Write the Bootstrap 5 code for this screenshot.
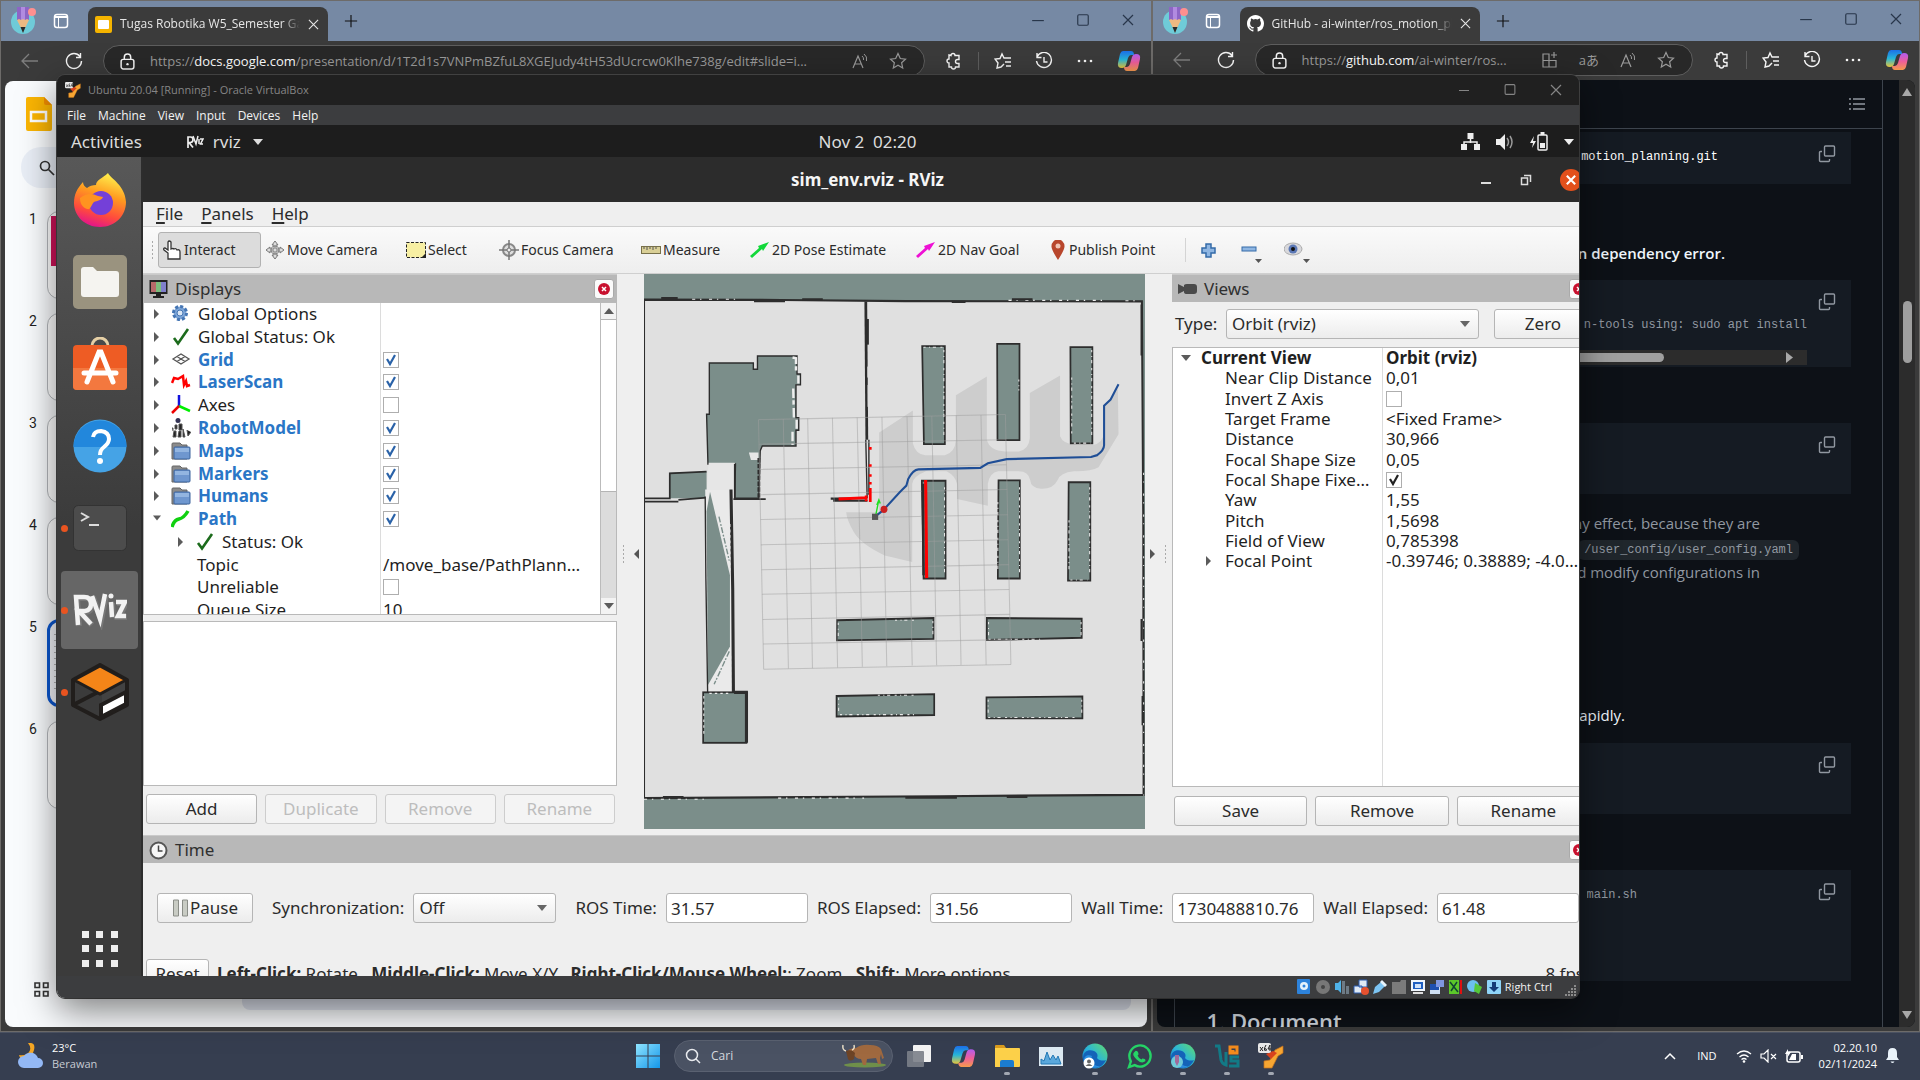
<!DOCTYPE html>
<html lang="id">
<head>
<meta charset="utf-8">
<meta name="viewport" content="width=device-width, initial-scale=1">
<title>Desktop</title>
<link href="https://cdn.jsdelivr.net/npm/bootstrap@5.3.0/dist/css/bootstrap.min.css" rel="stylesheet">
<script src="https://cdn.jsdelivr.net/npm/bootstrap@5.3.0/dist/js/bootstrap.bundle.min.js"></script>
<style>
  :root { --win: "Open Sans", sans-serif; --ubu: "Noto Sans", sans-serif; --mono: "Liberation Mono", monospace; }
  html, body { height: 100%; }
  body { font-family: var(--win); font-size: 12px; line-height: 16px; background: #3a3a3a; overflow: hidden; }
  svg { display: block; flex: none; }
  button, input, select { font-family: inherit; }
  .desktop { height: calc(100vh - 48px); }
  .minh0 { min-height: 0; }
  .bare { background: none; border: 0; padding: 0; color: inherit; display: flex; align-items: center; justify-content: center; }

  /* browser windows */
  .browser { background: #3b3b3b; border: 1px solid #6d6b69; min-width: 0; }
  .browser-l { flex: 3 1 0; } .browser-r { flex: 2 1 0; }
  .tabstrip { height: 40px; background: #7689a4; padding-left: 10px; }
  .tab { width: 240px; height: 34px; background: #3b3b3b; border-radius: 8px 8px 0 0; color: #e6e6e6; padding: 0 9px 0 7px; margin-left: 19px; }
  .tab-name { overflow: hidden; white-space: nowrap; -webkit-mask-image: linear-gradient(90deg, #000 90%, transparent); mask-image: linear-gradient(90deg, #000 90%, transparent); }
  .winbtns { gap: 30px; color: #28364a; padding: 0 16px 3px 0; }
  .toolbar-b { height: 40px; color: #f4f4f4; padding: 0 10px 0 20px; }
  .toolbar-b > button + button { margin-left: 26px; }
  .addr { height: 32px; background: #282828; border: 1px solid #5e5e5e; border-radius: 16px; color: #9a9a9a; font-size: 13px; margin: 0 20px; padding: 0 17px 0 16px; gap: 20px; }
  .addr b { color: #fff; font-weight: 400; }
  .addr-text { overflow: hidden; white-space: nowrap; margin-left: -5px; }
  .addr-tr { font-family: "Open Sans", "Noto Sans CJK JP", sans-serif; }
  .tools { gap: 23px; }
  .tools .vline { width: 1px; height: 18px; background: #5e5e5e; margin: 0 -8px; }
  .pane { margin: 0 4px 4px; border-radius: 8px; overflow: hidden; }

  /* slides page */
  .slides { background: #f9fbfd; padding-left: 16px; }
  .slides .find { width: 60px; height: 41px; background: #e9eef6; border-radius: 20px; padding-left: 18px; }
  .thumbs { gap: 14px; margin-top: 23px; }
  .thumb { height: 88px; width: 150px; background: #fff; border: 1px solid #b4b7bb; border-radius: 12px; color: #8a8a8a; padding: 12px 4px; overflow: hidden; }
  .thumb.on { border: 3px solid #0b57d0; background: #f5f7fb; }
  .thumb-no { width: 26px; color: #1f1f1f; font-family: Roboto, sans-serif; font-size: 14px; padding-left: 8px; }
  .cover { height: 50px; background: #d0125a; margin: -8px 0 0 -1px; }
  .lines { width: 60px; height: 60px; background: repeating-linear-gradient(#b5b5b5 0 1px, transparent 1px 6px); }
  .foot { padding: 0 16px 17px 13px; gap: 193px; }
  .notes { height: 42px; background: #dfe3ee; border-radius: 8px; }

  /* repository page */
  .gh { background: #0d1117; color: #9198a1; font-size: 15px; line-height: 24px; }
  .gh-col { border: solid #3d444d; border-width: 0 1px; margin: 0 16px 0 17px; width: 0; }
  .gh-head { height: 49px; border-bottom: 1px solid #3d444d; padding-right: 17px; margin-bottom: 3px; }
  .blk { background: #151b23; margin-right: 31px; padding: 13px 15px 0 0; height: 71px; overflow: hidden; }
  .blk.b1 { height: 52px; margin-bottom: 57px; } .blk.b2 { height: 87px; margin: 15px 31px 56px 0; }
  .blk.b4 { margin: 16px 31px 56px 0; } .blk.b5 { height: 111px; margin-bottom: 26px; }
  .blk pre, .gh code { font-family: var(--mono); font-size: 12px; line-height: 20px; color: #9198a1; margin: 0; }
  .blk pre { overflow: hidden; padding-top: 2px; }
  .blk.b1 pre { color: #fff; padding-right: 100px; } .blk.b2 pre { text-align: right; padding-right: 29px; padding-top: 4px; } .blk.b5 pre { padding-right: 181px; }
  .gh code { background: #20262c; border-radius: 6px; padding: 3px 6px; }
  .gh p { margin: 0; text-align: right; color: #f0f6fc; }
  .gh .lead-err { padding-right: 157px; }
  .gh .rap { padding: 119px 257px 0 0; }
  .gh .note { color: #9198a1; padding: 17px 83px 0 0; }
  .gh .note span { padding-right: 39px; }
  .gh h2 { font-size: 22px; line-height: 28px; font-weight: 600; color: #d5dbe2; margin: 0 0 0 32px; }
  .gutter { width: 16px; background: #2c2c2c; padding: 8px 0; }
  .gutter .thumb-v { width: 9px; height: 62px; border-radius: 5px; background: #9f9f9f; margin-top: 205px; }
  .hscroll { height: 15px; background: #2c2c2c; margin: 15px 29px 0 0; padding-right: 14px; }
  .hscroll div { width: 340px; height: 9px; border-radius: 5px; background: #9f9f9f; margin-right: 122px; }

  /* virtual machine window */
  .vm, .vm-shadow { position: absolute; left: 57px; right: 341px; top: 75px; bottom: 82px; border-radius: 8px; }
  .vm { overflow: hidden; background: #3c3d3f; color: #f2f2f2; }
  .vm-shadow { box-shadow: 0 12px 36px rgba(0,0,0,.5), 0 0 0 1px #4a4a4a; }
  .vm-title { height: 30px; background: #202020; color: #858585; font-size: 11px; padding: 0 16px 0 8px; gap: 7px; }
  .vm-btns { gap: 32px; }
  .vm-menu { height: 21px; padding: 1px 0 0 10px; gap: 12px; }
  .vm-menu a, .rv-menu a { color: inherit; text-decoration: none; }
  .vm-status { height: 22px; padding-right: 2px; gap: 3px; font-size: 11px; }
  .guest { overflow: hidden; font-family: var(--ubu); font-size: 17px; line-height: 22px; }
  .topbar { height: 32px; background: #1d1d1d; color: #dcdcdc; display: grid; grid-template-columns: 1fr auto 1fr; padding: 1px 5px 0 14px; }
  .topbar .date { padding-left: 90px; }
  .topbar .app-ic { margin: 0 9px 0 44px; }
  .dock { width: 86px; background: linear-gradient(#585858, #3b3b3b 45%); border-right: 2px solid #2d2d2d; padding: 4px 0 4px 1px; }
  .dock-item { width: 77px; height: 78px; border-radius: 4px; margin: 0 auto 4px; position: relative; }
  .dock-item.sel { background: #666; }
  .dock-item.run::before { content: ""; position: absolute; left: 0; top: 36px; width: 7px; height: 7px; border-radius: 50%; background: #e95420; }

  /* rviz */
  .rviz { background: #efefef; color: #2b2b2b; margin-right: -13px; min-width: 0; }
  .rv-title { height: 45px; background: #2c2c2c; color: #f5f5f5; font-weight: 700; display: grid; grid-template-columns: 1fr auto 1fr; padding: 2px 10px 0; }
  .rv-btns { gap: 28px; padding-bottom: 1px; }
  .rv-close { width: 22px; height: 22px; border-radius: 50%; background: #e2501c; color: #fff; }
  .rv-menu { height: 25px; padding: 1px 0 0 13px; gap: 18px; }
  .rv-menu u { text-underline-offset: 2px; text-decoration-thickness: 2px; }
  .rv-tools { height: 48px; background: linear-gradient(#fafafa, #eee); border: solid #cfcfcf; border-width: 1px 0; font-size: 14px; padding: 1px 0 0 8px; }
  .rv-tools .tool { height: 36px; border: 1px solid transparent; border-radius: 3px; padding: 0 3px; gap: 2px; justify-content: flex-start; white-space: nowrap; }
  .rv-tools .tool.down { background: #dcdcdc; border-color: #b2b2b2; }
  .rv-tools .sep { border-left: 1px solid #d4d4d4; height: 24px; margin: 0 15px 0 3px; }
  .rv-tools .more { gap: 21px; }
  .w1 { width: 103px; } .w2 { width: 141px; } .w3 { width: 93px; } .w4 { width: 142px; } .w5 { width: 109px; } .w6 { width: 166px; } .w7 { width: 135px; } .w8 { width: 135px; }
  .ph { height: 28px; background: #b8b8b8; border-top: 1px solid #cacaca; color: #303030; padding: 1px 3px 0 6px; gap: 7px; }
  .ph svg.ic { width: 19px; }
  .xbtn { width: 20px; height: 20px; background: #fafafa; border: 1px solid #aaa; border-radius: 3px; margin-left: auto; }
  .btn-q { height: 30px; flex: 1 1 0; padding: 0; font-size: 17px; line-height: 22px; color: #2b2b2b; border: 1px solid #b5b5b5; border-radius: 3px; background: linear-gradient(#fff, #ececec); }
  .btn-q:disabled { color: #bdbdbd; border-color: #cdcdcd; background: #f4f4f4; opacity: 1; }
  .disp { width: 474px; } .views { width: 420px; }
  .tree { background: #fff; border: 1px solid #b9b9b9; min-height: 0; overflow: hidden; color: #1f1f1f; }
  .tree-rows { display: grid; grid-auto-rows: 1fr; flex: 1; white-space: nowrap; }
  .d-rows { height: 319px; background: linear-gradient(#dcdcdc, #dcdcdc) 236px 0 / 1px 100% no-repeat; }
  .v-rows { height: 224px; line-height: 20px; }
  .v-tree { background: linear-gradient(#dcdcdc, #dcdcdc) 209px 0 / 1px 100% no-repeat #fff; }
  .tr-d { display: grid; grid-template-columns: 239px 1fr; align-items: center; }
  .tr-v { display: grid; grid-template-columns: 213px 1fr; align-items: center; }
  .tr-d > :first-child { display: flex; align-items: center; padding-left: 9px; }
  .tr-d > .lvl2:first-child { padding-left: 33px; }
  .tr-d > .lvl3:first-child { padding-left: 53px; }
  .tr-d .ar { width: 18px; height: 12px; } .tr-d .ic { width: 20px; height: 20px; margin-right: 7px; }
  .tr-v > :first-child { display: flex; align-items: center; padding-left: 8px; }
  .tr-v .ar { width: 20px; height: 12px; } .tr-v .sub { padding-left: 44px; }
  .blue { color: #2a76c6; font-weight: 700; }
  .tick.form-check-input { width: 16px; height: 16px; margin: 0; border: 1px solid #aeaeae; border-radius: 0; background: #fff center / 14px no-repeat; display: block; }
  .tick.form-check-input:checked { background-color: #fff; border-color: #aeaeae; background-image: url("data:image/svg+xml,%3Csvg xmlns='http://www.w3.org/2000/svg' viewBox='0 0 14 14'%3E%3Cpath d='M3 6l3 5 5-9' fill='none' stroke='%232a62a8' stroke-width='2.2'/%3E%3C/svg%3E"); }
  .tick.blk-tick.form-check-input:checked { background-image: url("data:image/svg+xml,%3Csvg xmlns='http://www.w3.org/2000/svg' viewBox='0 0 14 14'%3E%3Cpath d='M3 6l3 5 5-9' fill='none' stroke='%23222' stroke-width='2.2'/%3E%3C/svg%3E"); }
  .sb { width: 16px; background: #dcdcdc; border-left: 1px solid #bbb; }
  .sb .end { height: 16px; background: #f3f3f3; }
  .sb .grip { height: 173px; background: #fff; border: solid #b4b4b4; border-width: 1px 0; }
  .form-select.q { height: 30px; padding: 0 24px 0 5px; font-size: 17px; line-height: 22px; color: #2b2b2b; border: 1px solid #b5b5b5; border-radius: 3px; background: url("data:image/svg+xml,%3Csvg xmlns='http://www.w3.org/2000/svg' viewBox='0 0 10 6'%3E%3Cpath d='M0 0h10L5 6z' fill='%23666'/%3E%3C/svg%3E") right 8px center / 10px 6px no-repeat, linear-gradient(#fff, #ececec); }
  .form-control.q { height: 30px; min-width: 0; flex: 1 1 0; padding: 0 4px; font-size: 17px; line-height: 22px; color: #2b2b2b; border: 1px solid #b5b5b5; border-radius: 3px; background: #fff; }
  .type-row { height: 45px; padding-left: 3px; }
  .type-row label { width: 51px; } .type-row .form-select.q { width: 253px; }
  .type-row .btn-q { margin-left: 15px; padding: 0 26px; }
  .map { min-width: 0; height: calc(100% - 6px); }
  .time-row { padding: 0 13px 0 14px; margin-top: 30px; white-space: nowrap; gap: 9px; }
  .time-row .btn-q { flex: 0 0 96px; }
  .time-row .sync-l { margin-left: 10px; } .time-row .form-select.q { width: 143px; } .time-row .ros-l { margin-left: 10px; }
  .bottom { height: 141px; overflow: hidden; }
  .blank { height: 165px; background: #fff; border: 1px solid #b9b9b9; margin: 6px 0 8px; }
  .disp-btns { padding: 0 2px 11px 3px; } .view-btns { padding: 9px 2px; }
  .split { width: 27px; color: #555; }
  .dots-v { width: 3px; height: 20px; background: radial-gradient(circle, #aaa 1px, transparent 1px) 0 0 / 3px 4px; }
  .rv-tools .dots-v { margin-right: 4px; }
  .status-row { margin: 36px 0 0 3px; color: #2b2b2b; white-space: nowrap; }
  .reset { flex: none; width: 63px; }
  .status-row .fps { margin-left: auto; padding-right: 8px; }

  /* taskbar */
  .taskbar { height: 48px; background: #363e50; border-top: 1px solid #4b5262; color: #fff; display: grid; grid-template-columns: 1fr auto 1fr; font-size: 11px; padding: 0 21px 2px 18px; }
  .taskbar .muted { color: #c6cad2; }
  .apps { gap: 16px; padding-left: 2px; }
  .app { width: 28px; height: 46px; position: relative; }
  .app.open::after { content: ""; position: absolute; left: 11px; bottom: 4px; width: 6px; height: 3px; border-radius: 2px; background: #a3a8b2; }
  .tb-search { width: 219px; height: 32px; border-radius: 16px; background: #4a5263; border: 1px solid #5a6171; padding: 0 4px 0 10px; color: #d5d8de; margin: 0 -4px; }
  .tb-search input { background: none; border: 0; color: #d5d8de; font-size: 12px; outline: 0; min-width: 0; padding: 0 0 0 10px; }
  .tb-search input::placeholder { color: #d5d8de; opacity: 1; }
  .lang { margin: 0 19px 0 21px; } .clock { margin: 0 9px 0 16px; }
</style>
</head>
<body>
<svg width="0" height="0" class="position-absolute" aria-hidden="true">
  <defs>
    <linearGradient id="gff" x1=".7" y1="0" x2=".4" y2="1"><stop offset="0" stop-color="#fff44f"/><stop offset=".4" stop-color="#ff9a1f"/><stop offset=".75" stop-color="#ff4a3d"/><stop offset="1" stop-color="#e3158a"/></linearGradient>
    <linearGradient id="gedge" x1="0" y1="1" x2="1" y2="0"><stop offset="0" stop-color="#1268c4"/><stop offset=".5" stop-color="#2bb5d8"/><stop offset="1" stop-color="#63dd68"/></linearGradient>
    <linearGradient id="gcopa" x1="0" y1="0" x2="0" y2="1"><stop offset="0" stop-color="#1c6fe8"/><stop offset=".5" stop-color="#26b5d8"/><stop offset="1" stop-color="#e8c63a"/></linearGradient>
    <linearGradient id="gcopb" x1="0" y1="0" x2="0" y2="1"><stop offset="0" stop-color="#b05cf0"/><stop offset=".5" stop-color="#ee5e9a"/><stop offset="1" stop-color="#f59a4c"/></linearGradient>
    <linearGradient id="gwin" x1="0" y1="0" x2="1" y2="1"><stop offset="0" stop-color="#8fe4ff"/><stop offset="1" stop-color="#1496e8"/></linearGradient>
  </defs>
  <symbol id="pencil" viewBox="0 0 26 30"><circle cx="12" cy="16" r="12" fill="#6fcbd8"/><path d="M6 1h12v13H6z" fill="#8d65c5"/><path d="M10 1h4v13h-4z" fill="#b18be0"/><path d="M6 14l2-1 2 1 2-1 2 1 2-1 2 1-6 12z" fill="#edb982"/><path d="M9.500 21h5L12 27z" fill="#2a2a2a"/><circle cx="21" cy="6" r="4" fill="#ff8f8f"/></symbol>
  <symbol id="wspace" viewBox="0 0 16 16"><rect x="1.500" y="1.500" width="13" height="13" rx="2.500" fill="none" stroke="#fff" stroke-width="1.500"/><path d="M1.500 3h13v2h-13z" fill="#fff"/><path d="M5.500 5v9" stroke="#fff"/></symbol>
  <symbol id="x" viewBox="0 0 12 12"><path d="M1 1l10 10M11 1L1 11" stroke="currentColor" stroke-width="1.200" fill="none"/></symbol>
  <symbol id="plus" viewBox="0 0 16 16"><path d="M8 1v14M1 8h14" stroke="#111" stroke-width="1.300"/></symbol>
  <symbol id="min" viewBox="0 0 12 12"><path d="M1 6.500h10" stroke="currentColor"/></symbol>
  <symbol id="max" viewBox="0 0 12 12"><rect x="1.500" y="1.500" width="9" height="9" rx="1" fill="none" stroke="currentColor"/></symbol>
  <symbol id="back" viewBox="0 0 18 16"><path d="M17 8H1.500M8 1L1 8l7 7" fill="none" stroke="#7e7e7e" stroke-width="1.300"/></symbol>
  <symbol id="reload" viewBox="0 0 18 18"><path d="M15 4.500A7.500 7.500 0 1 0 16.500 9M15.500 1v4.500H11" fill="none" stroke="#f4f4f4" stroke-width="1.400"/></symbol>
  <symbol id="lock" viewBox="0 0 14 16"><rect x="1" y="6" width="12" height="9" rx="2" fill="none" stroke="#f4f4f4" stroke-width="1.400"/><path d="M4 6V4a3 3 0 0 1 6 0v2" fill="none" stroke="#f4f4f4" stroke-width="1.400"/><circle cx="7" cy="10.500" r="1.100" fill="#f4f4f4"/></symbol>
  <symbol id="read" viewBox="0 0 18 16"><path d="M2 15L7 3l5 12M4 11h6" fill="none" stroke="#9a9a9a" stroke-width="1.200"/><path d="M11 3q2 1.500 1.500 4M13 1q3.500 2.500 2.500 7" fill="none" stroke="#9a9a9a"/></symbol>
  <symbol id="star" viewBox="0 0 18 18"><path d="M9 1.500l2.300 5 5.200.6-3.900 3.600 1.100 5.300L9 13.300 4.300 16l1.100-5.300L1.500 7.100l5.200-.6z" fill="none" stroke="#9a9a9a" stroke-width="1.200"/></symbol>
  <symbol id="puzzle" viewBox="0 0 16 18"><path d="M5 3.500a2 2 0 0 1 4 0h4v4h-1.500a1.700 1.700 0 0 0 0 4H13V15H9.500a2 2 0 0 1-4 0H3v-4a2 2 0 0 1 0-4v-4z" fill="none" stroke="#f4f4f4" stroke-width="1.400"/></symbol>
  <symbol id="favs" viewBox="0 0 18 18"><path d="M10 12l-3 3-4 1 1-5L1 7l5-.5L8 2l2 4h7M11 10h6M12 14h5" fill="none" stroke="#f4f4f4" stroke-width="1.400"/></symbol>
  <symbol id="hist" viewBox="0 0 18 18"><path d="M2 5a7.500 7.500 0 1 1-.5 4M2 1v4.500h4.500M9 5v5h3.500" fill="none" stroke="#f4f4f4" stroke-width="1.400"/></symbol>
  <symbol id="dots" viewBox="0 0 16 4"><circle cx="2" cy="2" r="1.300" fill="#f4f4f4"/><circle cx="8" cy="2" r="1.300" fill="#f4f4f4"/><circle cx="14" cy="2" r="1.300" fill="#f4f4f4"/></symbol>
  <symbol id="copilot" viewBox="0 0 24 24"><path d="M6 2h8q3 0 3 4h-3q-2 0-3 3l-2 7q-1 3-4 3-5 0-4-5L3 5q1-3 3-3z" fill="url(#gcopa)"/><path d="M18 22h-8q-3 0-3-4h3q2 0 3-3l2-7q1-3 4-3 5 0 4 5l-2 9q-1 3-3 3z" fill="url(#gcopb)"/></symbol>
  <symbol id="copy" viewBox="0 0 18 18"><rect x="6.500" y="1" width="10" height="10" rx="1" fill="none" stroke="#9198a1" stroke-width="1.400"/><path d="M4 6.500H2.500q-1 0-1 1v8q0 1 1 1h8q1 0 1-1V14" fill="none" stroke="#9198a1" stroke-width="1.400"/></symbol>
  <symbol id="r" viewBox="0 0 8 12"><path d="M1 1l5 5-5 5z" fill="#5b5b5b"/></symbol>
  <symbol id="d" viewBox="0 0 10 8"><path d="M0 1h10L5 7z" fill="#5b5b5b"/></symbol>
  <symbol id="redx" viewBox="0 0 14 14"><circle cx="7" cy="7" r="6" fill="#c8102e"/><path d="M5 5l4 4M9 5L5 9" stroke="#fff" stroke-width="1.500"/></symbol>
  <symbol id="ok" viewBox="0 0 20 20"><path d="M3 11l4 5.500L17 2" fill="none" stroke="#1c6b1c" stroke-width="2.600"/></symbol>
  <symbol id="fold" viewBox="0 0 20 20"><path d="M1 18V3q0-1 1-1h7l2 2h5v14z" fill="#8b8b8b" stroke="#666"/><rect x="3" y="6" width="16" height="12" rx="1" fill="#6f97cf" stroke="#3d649d"/><path d="M4 7h14v4H4z" fill="#93b5e0"/></symbol>
  <symbol id="edge" viewBox="0 0 26 26"><circle cx="13" cy="13" r="12.500" fill="url(#gedge)"/><path d="M1 15C1 8 7 6 12 8c4 2 4 5 3 7 2 3 7 3 9 2-2 5-7 8-12 8C6 25 1 21 1 15z" fill="#1463b8"/><path d="M10 13c-2 5 2 11 8 10-6 4-15 1-16-6 0-4 4-6 8-4z" fill="#2c8fe0"/></symbol>
  <symbol id="vbox" viewBox="0 0 26 26"><path d="M25 3l-8 4-5 10-6 1v7h8l6-12 5-3z" fill="#f7a632" stroke="#c4701a" stroke-width=".7"/><path d="M8 11l5 5 6-6-4-2z" fill="#d8421c"/><rect width="13" height="10" rx="2" fill="#e8e8e8"/><path d="M2 4l3 4M5 4L2 8M8 2Q6 5 6.500 7q1 2 2 0 0-2-2-1M12 8V2l-2 4h3" fill="none" stroke="#222"/></symbol>
  <symbol id="hand" viewBox="0 0 20 22"><path d="M6 20V14L2 11q-1-2 1-2l3 2V3q1-2 3 0v7q2-1 3 0 2-1 3 1 3-1 3 2v7z" fill="#fff" stroke="#333" stroke-width="1.300"/></symbol>
  <symbol id="move" viewBox="0 0 20 20"><path d="M10 1l3 4h-2v4h4V7l4 3-4 3v-2h-4v4h2l-3 4-3-4h2v-4H5v2l-4-3 4-3v2h4V5H7z" fill="#ddd" stroke="#777"/><circle cx="10" cy="10" r="4" fill="none" stroke="#888"/></symbol>
  <symbol id="focus" viewBox="0 0 20 20"><circle cx="10" cy="10" r="6" fill="#ddd" stroke="#888" stroke-width="2"/><path d="M10 0v20M0 10h20" stroke="#777" stroke-width="1.500"/><circle cx="10" cy="10" r="2" fill="#eee" stroke="#777"/></symbol>
</svg>

<main class="desktop d-flex">
  <!-- left browser: presentation -->
  <section class="browser browser-l d-flex flex-column">
    <div class="tabstrip d-flex align-items-end">
      <div class="d-flex align-items-center align-self-center gap-3"><svg width="26" height="30"><use href="#pencil"/></svg><svg width="16" height="16"><use href="#wspace"/></svg></div>
      <div class="tab d-flex align-items-center gap-2">
        <svg width="17" height="17" viewBox="0 0 17 17"><rect width="17" height="17" rx="2" fill="#f5b400"/><rect x="3" y="4" width="11" height="9" rx="1" fill="#fff"/></svg>
        <span class="tab-name flex-fill">Tugas Robotika W5_Semester Gan</span>
        <button class="bare" aria-label="Close tab"><svg width="11" height="11"><use href="#x"/></svg></button>
      </div>
      <button class="bare align-self-center ms-3" aria-label="New tab"><svg width="14" height="14"><use href="#plus"/></svg></button>
      <div class="winbtns d-flex ms-auto align-self-center">
        <button class="bare" aria-label="Minimize"><svg width="14" height="14"><use href="#min"/></svg></button>
        <button class="bare" aria-label="Maximize"><svg width="16" height="14"><use href="#max"/></svg></button>
        <button class="bare" aria-label="Close"><svg width="14" height="12"><use href="#x"/></svg></button>
      </div>
    </div>
    <div class="toolbar-b d-flex align-items-center">
      <button class="bare" aria-label="Back"><svg width="18" height="16"><use href="#back"/></svg></button>
      <button class="bare" aria-label="Reload"><svg width="18" height="18"><use href="#reload"/></svg></button>
      <div class="addr d-flex align-items-center flex-fill overflow-hidden">
        <svg width="15" height="17"><use href="#lock"/></svg>
        <span class="addr-text flex-fill">https://<b>docs.google.com</b>/presentation/d/1T2d1s7VNPmBZfuL8XGEJudy4tH53dUcrcw0Klhe738g/edit#slide=i...</span>
        <svg width="18" height="16"><use href="#read"/></svg><svg width="18" height="18"><use href="#star"/></svg>
      </div>
      <div class="tools d-flex align-items-center">
        <svg width="18" height="18"><use href="#puzzle"/></svg><span class="vline"></span><svg width="18" height="18"><use href="#favs"/></svg><svg width="18" height="18"><use href="#hist"/></svg><svg width="18" height="4"><use href="#dots"/></svg><svg width="24" height="24"><use href="#copilot"/></svg>
      </div>
    </div>
    <div class="pane slides flex-fill d-flex flex-column">
      <svg class="ms-1 mt-3" width="28" height="34" viewBox="0 0 28 34"><path d="M1 2q0-2 2-2h16l8 8v24q0 2-2 2H3q-2 0-2-2z" fill="#fbb503"/><path d="M19 0v6q0 2 2 2h6z" fill="#f08c00"/><rect x="6" y="15" width="15" height="9" fill="none" stroke="#fff" stroke-width="2.500"/></svg>
      <div class="find d-flex align-items-center mt-3"><svg width="16" height="16" viewBox="0 0 16 16"><circle cx="6" cy="6" r="4.500" fill="none" stroke="#333" stroke-width="1.700"/><path d="M9.500 9.500L15 15" stroke="#333" stroke-width="1.700"/></svg></div>
      <div class="thumbs d-flex flex-column">
        <div class="d-flex"><span class="thumb-no">1</span><div class="thumb"><div class="cover"></div></div></div>
        <div class="d-flex"><span class="thumb-no">2</span><div class="thumb"></div></div>
        <div class="d-flex"><span class="thumb-no">3</span><div class="thumb"></div></div>
        <div class="d-flex"><span class="thumb-no">4</span><div class="thumb"></div></div>
        <div class="d-flex"><span class="thumb-no">5</span><div class="thumb on"><div class="lines"></div></div></div>
        <div class="d-flex"><span class="thumb-no">6</span><div class="thumb"></div></div>
      </div>
      <div class="foot mt-auto d-flex align-items-center">
        <svg width="15" height="15" viewBox="0 0 15 15"><path d="M1 1h4.500v4.500H1zM9.500 1H14v4.500H9.500zM1 9.500h4.500V14H1zM9.500 9.500H14V14H9.500z" fill="none" stroke="#333" stroke-width="1.600"/></svg>
        <div class="notes flex-fill"></div>
      </div>
    </div>
  </section>

  <!-- right browser: repository -->
  <section class="browser browser-r d-flex flex-column">
    <div class="tabstrip d-flex align-items-end">
      <div class="d-flex align-items-center align-self-center gap-3"><svg width="26" height="30"><use href="#pencil"/></svg><svg width="16" height="16"><use href="#wspace"/></svg></div>
      <div class="tab d-flex align-items-center gap-2">
        <svg width="17" height="17" viewBox="0 0 16 16"><path fill="#fff" d="M8 0C3.580 0 0 3.580 0 8c0 3.540 2.290 6.530 5.470 7.590.4.070.55-.17.55-.38 0-.19-.010-.82-.010-1.490-2.010.37-2.530-.49-2.690-.94-.090-.23-.48-.94-.82-1.130-.28-.15-.68-.52-.010-.53.63-.010 1.080.58 1.230.82.72 1.210 1.870.87 2.330.66.070-.52.28-.87.51-1.070-1.780-.2-3.640-.89-3.640-3.950 0-.87.31-1.590.82-2.150-.080-.2-.36-1.020.080-2.120 0 0 .67-.21 2.200.82a7.600 7.600 0 0 1 4 0c1.530-1.040 2.200-.82 2.200-.82.44 1.100.16 1.920.080 2.120.51.56.82 1.270.82 2.150 0 3.070-1.870 3.750-3.650 3.950.29.25.54.73.54 1.480 0 1.070-.010 1.930-.010 2.200 0 .21.15.46.55.38A8 8 0 0 0 16 8c0-4.420-3.580-8-8-8z"/></svg>
        <span class="tab-name flex-fill">GitHub - ai-winter/ros_motion_plan</span>
        <button class="bare" aria-label="Close tab"><svg width="11" height="11"><use href="#x"/></svg></button>
      </div>
      <button class="bare align-self-center ms-3" aria-label="New tab"><svg width="14" height="14"><use href="#plus"/></svg></button>
      <div class="winbtns d-flex ms-auto align-self-center">
        <button class="bare" aria-label="Minimize"><svg width="14" height="14"><use href="#min"/></svg></button>
        <button class="bare" aria-label="Maximize"><svg width="16" height="14"><use href="#max"/></svg></button>
        <button class="bare" aria-label="Close"><svg width="14" height="12"><use href="#x"/></svg></button>
      </div>
    </div>
    <div class="toolbar-b d-flex align-items-center">
      <button class="bare" aria-label="Back"><svg width="18" height="16"><use href="#back"/></svg></button>
      <button class="bare" aria-label="Reload"><svg width="18" height="18"><use href="#reload"/></svg></button>
      <div class="addr d-flex align-items-center flex-fill overflow-hidden">
        <svg width="15" height="17"><use href="#lock"/></svg>
        <span class="addr-text flex-fill">https://<b>github.com</b>/ai-winter/ros...</span>
        <svg width="18" height="18" viewBox="0 0 18 18"><path d="M2 3h6v13H2zM8 9.500h7V16H2M2 9.500h6M13 1v6M10 4h6" fill="none" stroke="#9a9a9a" stroke-width="1.200"/></svg>
        <span class="addr-tr">aあ</span>
        <svg width="18" height="16"><use href="#read"/></svg><svg width="18" height="18"><use href="#star"/></svg>
      </div>
      <div class="tools d-flex align-items-center">
        <svg width="18" height="18"><use href="#puzzle"/></svg><span class="vline"></span><svg width="18" height="18"><use href="#favs"/></svg><svg width="18" height="18"><use href="#hist"/></svg><svg width="18" height="4"><use href="#dots"/></svg><svg width="24" height="24"><use href="#copilot"/></svg>
      </div>
    </div>
    <div class="pane gh flex-fill d-flex minh0">
      <div class="gh-col flex-fill">
        <div class="gh-head d-flex align-items-center justify-content-end"><svg width="16" height="14" viewBox="0 0 16 14"><path d="M4 2h12M4 7h12M4 12h12M0 2h2M0 7h2M0 12h2" stroke="#9198a1" stroke-width="1.500"/></svg></div>
        <div class="blk b1 d-flex justify-content-end"><pre>motion_planning.git</pre><svg width="18" height="18"><use href="#copy"/></svg></div>
        <p class="lead-err fw-semibold">n dependency error.</p>
        <div class="blk b2">
          <svg class="ms-auto" width="18" height="18"><use href="#copy"/></svg>
          <pre>n-tools using: sudo apt install</pre>
          <div class="hscroll d-flex align-items-center justify-content-end"><div></div><svg width="7" height="11" viewBox="0 0 7 11"><path d="M0 0l7 5.500L0 11z" fill="#a8a8a8"/></svg></div>
        </div>
        <div class="blk"><svg class="ms-auto" width="18" height="18"><use href="#copy"/></svg></div>
        <p class="note"><span>ny effect, because they are</span><br><code>/user_config/user_config.yaml</code><br><span>d modify configurations in</span></p>
        <p class="rap">apidly.</p>
        <div class="blk b4"><svg class="ms-auto" width="18" height="18"><use href="#copy"/></svg></div>
        <div class="blk b5 d-flex justify-content-end"><pre>main.sh</pre><svg width="18" height="18"><use href="#copy"/></svg></div>
        <h2>1. Document</h2>
      </div>
      <div class="gutter d-flex flex-column align-items-center"><svg width="10" height="8" viewBox="0 0 10 8"><path d="M0 8h10L5 0z" fill="#a8a8a8"/></svg><div class="thumb-v"></div><svg class="mt-auto" width="10" height="8" viewBox="0 0 10 8"><path d="M0 0h10L5 8z" fill="#a8a8a8"/></svg></div>
    </div>
  </section>
</main>

<div class="vm-shadow"></div>
<section class="vm d-flex flex-column">
  <div class="vm-title d-flex align-items-center">
    <svg width="16" height="16"><use href="#vbox"/></svg><span>Ubuntu 20.04 [Running] - Oracle VirtualBox</span>
    <div class="vm-btns d-flex ms-auto">
      <button class="bare" aria-label="Minimize"><svg width="14" height="12"><use href="#min"/></svg></button>
      <button class="bare" aria-label="Maximize"><svg width="14" height="13"><use href="#max"/></svg></button>
      <button class="bare" aria-label="Close"><svg width="14" height="12"><use href="#x"/></svg></button>
    </div>
  </div>
  <nav class="vm-menu d-flex align-items-center"><a href="#">File</a><a href="#">Machine</a><a href="#">View</a><a href="#">Input</a><a href="#">Devices</a><a href="#">Help</a></nav>

  <div class="guest flex-fill d-flex flex-column minh0">
    <div class="topbar align-items-center">
      <div class="d-flex align-items-center"><span>Activities</span><svg class="app-ic" width="18" height="14" viewBox="0 0 18 14" aria-hidden="true"><path d="M2 13V2h2.500q2.500 0 2.500 3 0 2-2.500 2.500H3l4 5" fill="none" stroke="#eee" stroke-width="1.700"/><path d="M7 1l3 8 2-8M13 4v5M14 4h3l-2.500 5H17" fill="none" stroke="#eee" stroke-width="1.500"/></svg><span>rviz</span><svg class="ms-2 ps-1" width="14" height="8" viewBox="0 0 10 8"><path d="M0 1h10L5 7z" fill="#ddd"/></svg></div>
      <span class="date">Nov 2&nbsp; 02:20</span>
      <div class="d-flex align-items-center justify-content-end gap-3">
        <svg width="19" height="17" viewBox="0 0 19 17"><path d="M9.500 4v6M3 12V9h13v3" fill="none" stroke="#eee" stroke-width="1.500"/><path d="M6.500 0h6v6h-6zM0 11h6v6H0zM13 11h6v6h-6z" fill="#eee"/></svg>
        <svg width="18" height="16" viewBox="0 0 18 16"><path d="M0 5h4l5-5v16l-5-5H0z" fill="#eee"/><path d="M11 4q3 4 0 8M14 2q4 6 0 12" fill="none" stroke="#999" stroke-width="1.500"/></svg>
        <svg width="18" height="19" viewBox="0 0 18 19"><path d="M4 4L0 11h3l-1 5 4-7H3z" fill="#eee"/><rect x="8" y="3" width="9" height="15" rx="1" fill="none" stroke="#eee" stroke-width="1.500"/><path d="M10.500 0h4v3h-4zM10 11h5v5h-5z" fill="#eee"/></svg>
        <svg width="10" height="8" viewBox="0 0 10 8"><path d="M0 1h10L5 7z" fill="#eee"/></svg>
      </div>
    </div>
    <div class="flex-fill d-flex minh0">
      <nav class="dock d-flex flex-column flex-shrink-0">
        <button class="bare dock-item" aria-label="Firefox"><svg width="54" height="56" viewBox="0 0 54 56"><path d="M35 1c3 6 17 12 18 29 0 14-11 25-26 25S1 44 1 31c0-9 3-14 9-21 0 3 2 5 4 6 2-2 6-3 9-3 0-5 7-7 12-12z" fill="url(#gff)"/><circle cx="28" cy="31" r="12" fill="#7440d8"/><path d="M7 26c6-5 12-5 18-2l5 1c-1 3-6 4-9 5-3 3-3 8-7 7-5-2-7-6-7-11z" fill="#ff9320"/></svg></button>
        <button class="bare dock-item" aria-label="Files"><svg width="54" height="54" viewBox="0 0 54 54"><rect width="54" height="54" rx="5" fill="#9a937f"/><path d="M8 15q0-3 3-3h9l4 4h19q3 0 3 3v20q0 3-3 3H11q-3 0-3-3z" fill="#f5f4f0"/></svg></button>
        <button class="bare dock-item" aria-label="Software"><svg width="54" height="54" viewBox="0 0 54 54"><path d="M19 9a8 8 0 0 1 16 0" fill="none" stroke="#e5cfa5" stroke-width="3"/><rect y="8" width="54" height="45" rx="4" fill="#ee5c24"/><path d="M0 31h54v18q0 4-4 4H4q-4 0-4-4z" fill="#f3783f"/><path d="M14 45L26 15h2l12 30M11 36h32" fill="none" stroke="#fff" stroke-width="5" stroke-linecap="round"/></svg></button>
        <button class="bare dock-item" aria-label="Help"><svg width="54" height="54" viewBox="0 0 54 54"><circle cx="27" cy="27" r="26.500" fill="#45a3e6"/><path d="M.5 28a26.500 26.500 0 0 1 53 0z" fill="#2287dc"/><path d="M20 18q1-6 8-6 8 1 8 8 0 4-5 8-4 3-4 8" fill="none" stroke="#fff" stroke-width="4"/><circle cx="27" cy="42" r="3" fill="#fff"/></svg></button>
        <button class="bare dock-item run" aria-label="Terminal"><svg width="54" height="46" viewBox="0 0 54 46"><rect x=".5" y=".5" width="53" height="45" rx="5" fill="#4c4c4c" stroke="#333"/><path d="M8 8l7 4-7 4M16 20h10" fill="none" stroke="#ddd" stroke-width="2"/></svg></button>
        <button class="bare dock-item run sel" aria-label="RViz"><svg width="54" height="40" viewBox="0 0 54 40" aria-hidden="true"><g fill="none" stroke="#777" stroke-width="6" transform="translate(1 1)"><path d="M5 35L3 7h8q7 0 7 7 0 6-6 7H6l12 13M19 6l8 23 5-25M38 12l1 15M43 12h9l-7 14h8"/></g><g fill="none" stroke="#f2f2f2" stroke-width="4.500"><path d="M5 35L3 7h8q7 0 7 7 0 6-6 7H6l12 13M19 6l8 23 5-25M38 12l1 15M43 12h9l-7 14h8"/></g><circle cx="38" cy="6" r="2.500" fill="#f2f2f2"/></svg></button>
        <button class="bare dock-item run" aria-label="Gazebo"><svg width="58" height="58" viewBox="0 0 58 58"><path d="M29 2l27 15v25L29 56 2 42V17zM2 42l27-14 27 14" fill="none" stroke="#211e1c" stroke-width="4" stroke-linejoin="round"/><path d="M54 19v9L31 40V31z" fill="#424242"/><path d="M29 3l26 14-26 14L3 17z" fill="#f58518" stroke="#211e1c" stroke-width="3"/><path d="M30 42l25-13v12L30 54z" fill="#fff" stroke="#211e1c" stroke-width="4"/></svg></button>
        <button class="bare mt-auto mx-auto pb-1" aria-label="Show applications"><svg width="38" height="38" viewBox="0 0 38 38"><path d="M1 1h7v7H1zM15 1h7v7h-7zM30 1h7v7h-7zM1 15h7v7H1zM15 15h7v7h-7zM30 15h7v7h-7zM1 30h7v7H1zM15 30h7v7h-7zM30 30h7v7h-7z" fill="#eee"/></svg></button>
      </nav>

      <div class="rviz flex-fill d-flex flex-column">
        <div class="rv-title align-items-center">
          <span></span><span>sim_env.rviz - RViz</span>
          <div class="rv-btns d-flex align-items-center justify-content-end">
            <button class="bare" aria-label="Minimize"><svg width="12" height="12" viewBox="0 0 12 12"><path d="M1 9h10" stroke="#ddd" stroke-width="2"/></svg></button>
            <button class="bare" aria-label="Restore"><svg width="12" height="12" viewBox="0 0 12 12"><path d="M1.500 4h6v6.500h-6zM4 1.500h6.500V8" fill="none" stroke="#ddd" stroke-width="1.500"/></svg></button>
            <button class="bare rv-close" aria-label="Close"><svg width="10" height="10" viewBox="0 0 12 12"><path d="M1 1l10 10M11 1L1 11" stroke="#fff" stroke-width="2.500"/></svg></button>
          </div>
        </div>
        <nav class="rv-menu d-flex align-items-center"><a href="#"><u>F</u>ile</a><a href="#"><u>P</u>anels</a><a href="#"><u>H</u>elp</a></nav>
        <div class="rv-tools d-flex align-items-center">
          <span class="dots-v"></span>
          <button class="bare tool down w1"><svg width="20" height="22"><use href="#hand"/></svg>Interact</button>
          <button class="bare tool w2"><svg width="20" height="22"><use href="#move"/></svg>Move Camera</button>
          <button class="bare tool w3"><svg width="20" height="16" viewBox="0 0 20 16"><rect x=".5" y=".5" width="19" height="15" fill="#f7efa3" stroke="#222" stroke-dasharray="3 1.500"/><path d="M20 11v5h-5z" fill="#222"/></svg>Select</button>
          <button class="bare tool w4"><svg width="20" height="20"><use href="#focus"/></svg>Focus Camera</button>
          <button class="bare tool w5"><svg width="20" height="8" viewBox="0 0 20 8"><rect x=".5" y=".5" width="19" height="7" fill="#d9cf96" stroke="#77704a"/><path d="M3 1v2M6 1v3M9 1v2M12 1v3M15 1v2" stroke="#555"/></svg>Measure</button>
          <button class="bare tool w6"><svg width="20" height="16" viewBox="0 0 20 16"><path d="M0 14L9 6l-1-2L19 0l-6 9-1-2-10 9z" fill="#12d83a"/></svg>2D Pose Estimate</button>
          <button class="bare tool w7"><svg width="20" height="16" viewBox="0 0 20 16"><path d="M0 14L9 6l-1-2L19 0l-6 9-1-2-10 9z" fill="#ee10d4"/></svg>2D Nav Goal</button>
          <button class="bare tool w8 gap-1"><svg width="14" height="20" viewBox="0 0 14 20"><path d="M7 20Q0 9 .5 6A6.500 6.500 0 0 1 13.500 6Q14 9 7 20z" fill="#b8462c"/><circle cx="7" cy="6" r="2.500" fill="#f0c4b4"/></svg>Publish Point</button>
          <span class="sep"></span>
          <div class="more d-flex align-items-center">
            <button class="bare" aria-label="Add tool"><svg width="19" height="15" viewBox="0 0 19 15"><path d="M5 1h5v4h4v5h-4v4H5v-4H1V5h4z" fill="#8fb6e2" stroke="#346ba8" stroke-width="1.500"/></svg></button>
            <button class="bare" aria-label="Remove tool"><svg width="22" height="26" viewBox="0 0 22 26"><rect x="1" y="10" width="14" height="4" fill="#8fb6e2" stroke="#346ba8"/><path d="M14 22h7l-3.500 4z" fill="#555"/></svg></button>
            <button class="bare" aria-label="Views"><svg width="26" height="26" viewBox="0 0 26 26"><ellipse cx="9" cy="12" rx="9" ry="6" fill="#d8d8dc" stroke="#aaa"/><circle cx="9" cy="12" r="4.500" fill="#5a77b5"/><circle cx="9" cy="12" r="2" fill="#111"/><path d="M19 22h7l-3.500 4z" fill="#555"/></svg></button>
          </div>
        </div>

        <div class="flex-fill d-flex minh0">
          <!-- displays panel -->
          <section class="disp d-flex flex-column flex-shrink-0">
            <div class="ph d-flex align-items-center flex-shrink-0"><svg class="ic" width="19" height="20" viewBox="0 0 19 20"><rect x=".5" y="1" width="18" height="14" fill="#222"/><path d="M2 3h5v10H2z" fill="#b86a6a"/><path d="M7 3h5v10H7z" fill="#7dbd7d"/><path d="M12 3h5v10h-5z" fill="#8080cc"/><path d="M7 15h5v2h3v2H4v-2h3z" fill="#222"/></svg>Displays<button class="bare xbtn" aria-label="Close panel"><svg width="14" height="14"><use href="#redx"/></svg></button></div>
            <div class="tree d-flex flex-fill">
              <div class="tree-rows d-rows">
                <div class="tr-d"><span><svg class="ar"><use href="#r" width="8" height="12"/></svg><svg class="ic" viewBox="0 0 20 20"><circle cx="9" cy="9" r="6.500" fill="#7ea6d8" stroke="#4676b4" stroke-width="3" stroke-dasharray="3 2"/><circle cx="9" cy="9" r="3" fill="#dbe7f5" stroke="#4676b4"/></svg>Global Options</span></div>
                <div class="tr-d"><span><svg class="ar"><use href="#r" width="8" height="12"/></svg><svg class="ic"><use href="#ok"/></svg>Global Status: Ok</span></div>
                <div class="tr-d"><label for="c1" class="blue"><svg class="ar"><use href="#r" width="8" height="12"/></svg><svg class="ic" viewBox="0 0 20 20"><path d="M2 9l8-5 8 5-8 5zM6 6.500l8 5M14 6.500l-8 5" fill="none" stroke="#555" stroke-width="1.300"/></svg>Grid</label><input id="c1" class="form-check-input tick" type="checkbox" checked></div>
                <div class="tr-d"><label for="c2" class="blue"><svg class="ar"><use href="#r" width="8" height="12"/></svg><svg class="ic" viewBox="0 0 20 20"><path d="M1 11l2-5 4 1 5-3 1 9 2-4 1 5 3-1" fill="none" stroke="#f00" stroke-width="2.500"/></svg>LaserScan</label><input id="c2" class="form-check-input tick" type="checkbox" checked></div>
                <div class="tr-d"><label for="c3"><svg class="ar"><use href="#r" width="8" height="12"/></svg><svg class="ic" viewBox="0 0 20 20"><path d="M8 0v11" stroke="#11d" stroke-width="2.500"/><path d="M8 11l11 5" stroke="#0e0" stroke-width="2.500"/><path d="M8 11l-7 7" stroke="#e00" stroke-width="2.500"/></svg>Axes</label><input id="c3" class="form-check-input tick" type="checkbox"></div>
                <div class="tr-d"><label for="c4" class="blue"><svg class="ar"><use href="#r" width="8" height="12"/></svg><svg class="ic" viewBox="0 0 20 20"><circle cx="7" cy="2.500" r="2.500" fill="#335"/><path d="M4 7h2v4H4zM8 6h3v6H8zM3 13h2v6H2zM8 13h2v6H7zM1 10h1v3M12 11l2 8h-2zM16 12l1 6 3-4" fill="#222" stroke="#555"/></svg>RobotModel</label><input id="c4" class="form-check-input tick" type="checkbox" checked></div>
                <div class="tr-d"><label for="c5" class="blue"><svg class="ar"><use href="#r" width="8" height="12"/></svg><svg class="ic"><use href="#fold"/></svg>Maps</label><input id="c5" class="form-check-input tick" type="checkbox" checked></div>
                <div class="tr-d"><label for="c6" class="blue"><svg class="ar"><use href="#r" width="8" height="12"/></svg><svg class="ic"><use href="#fold"/></svg>Markers</label><input id="c6" class="form-check-input tick" type="checkbox" checked></div>
                <div class="tr-d"><label for="c7" class="blue"><svg class="ar"><use href="#r" width="8" height="12"/></svg><svg class="ic"><use href="#fold"/></svg>Humans</label><input id="c7" class="form-check-input tick" type="checkbox" checked></div>
                <div class="tr-d"><label for="c8" class="blue"><svg class="ar"><use href="#d" width="8" height="10"/></svg><svg class="ic" viewBox="0 0 20 20"><path d="M1 18q2-7 7-8t9-8" fill="none" stroke="#10d010" stroke-width="3.500"/></svg>Path</label><input id="c8" class="form-check-input tick" type="checkbox" checked></div>
                <div class="tr-d"><span class="lvl2"><svg class="ar"><use href="#r" width="8" height="12"/></svg><svg class="ic"><use href="#ok"/></svg>Status: Ok</span></div>
                <div class="tr-d"><span class="lvl3">Topic</span><span>/move_base/PathPlann…</span></div>
                <div class="tr-d"><label for="c9" class="lvl3">Unreliable</label><input id="c9" class="form-check-input tick" type="checkbox"></div>
                <div class="tr-d"><span class="lvl3">Queue Size</span><span>10</span></div>
              </div>
              <div class="sb d-flex flex-column"><div class="end d-flex align-items-center justify-content-center"><svg width="10" height="8" viewBox="0 0 10 8"><path d="M0 7h10L5 1z" fill="#5b5b5b"/></svg></div><div class="grip"></div><div class="end mt-auto d-flex align-items-center justify-content-center"><svg width="10" height="8"><use href="#d"/></svg></div></div>
            </div>
            <div class="blank flex-shrink-0"></div>
            <div class="disp-btns d-flex gap-2 flex-shrink-0">
              <button class="btn btn-q">Add</button><button class="btn btn-q" disabled>Duplicate</button><button class="btn btn-q" disabled>Remove</button><button class="btn btn-q" disabled>Rename</button>
            </div>
          </section>
          <div class="split d-flex align-items-center justify-content-center gap-2 flex-shrink-0"><span class="dots-v"></span><svg width="6" height="10" viewBox="0 0 6 10"><path d="M6 0v10L1 5z" fill="#555"/></svg></div>

          <!-- 3D view: occupancy map, planned path and laser hits -->
          <svg class="map flex-fill" viewBox="40 17 1457 1518" preserveAspectRatio="none">
            <rect x="40" y="17" width="1457" height="1518" fill="#7b8e8a"/>
            <path d="M40 87L440 88 800 91 1488 92 1492 700 1493 1440 900 1444 40 1449z" fill="#e0e0e0" stroke="#2d2d2d" stroke-width="6"/>
            <path d="M1100 89h290M1440 90h40M40 1452h180M430 1449h250M180 86h130" stroke="#eee" stroke-width="3" stroke-dasharray="9 14 4 22"/>
            <path d="M90 83h48M360 91h90M500 86h60M935 93h40M1110 86h60M95 1446h60M800 1448h150M1095 1446h60M1487 100v140M1487 960v60M1490 1170v80" stroke="#2d2d2d" stroke-width="6" fill="none"/>
            <path d="M1493 560v900" stroke="#e8e8e8" stroke-width="3" stroke-dasharray="6 18 3 30"/>
            <!-- costmap -->
            <path d="M724 450L822 390V480Q830 510 858 512H915Q945 505 947 470V348L1037 297V470Q1045 500 1090 502H1130Q1160 495 1162 465V342L1250 294V460Q1258 482 1300 484H1345Q1375 480 1378 450V380L1397 360 1418 330 1420 455 1362 545Q1340 557 1290 556 1250 560 1243 580 1230 605 1195 604 1165 602 1163 580 1158 556 1130 556H1070Q1045 560 1040 590V650L950 632V590Q945 568 920 556H860Q822 570 820 590V804L740 786Q670 755 650 722 630 690 628 668H724z" fill="#cdcdcd"/>
            <!-- storage block, corridor and entrance -->
            <path d="M230 260H358V277H370V241H485V290H495V320H482V410H490V444H482V487H384L378 500 374 630H304L306 536H226L222 400H230z" fill="#7b8e8a" stroke="#2d2d2d" stroke-width="4"/>
            <path d="M472 245l10 2v40M489 294v22M474 330l2 80M484 415v25M472 448v36" fill="none" stroke="#eee" stroke-width="7" stroke-dasharray="26 6 12 9"/>
            <path d="M228 533H304V606H222zM345 505h28v20h-22z" fill="#e6e6e6"/>
            <path d="M115 560L222 557V630H115z" fill="#7b8e8a"/><path d="M222 557L115 562V630H40M40 639H140" fill="none" stroke="#2d2d2d" stroke-width="5"/>
            <path d="M140 634L222 628M296 632H394M304 536v98" fill="none" stroke="#2d2d2d" stroke-width="5"/>
            <path d="M374 520v110" stroke="#2d2d2d" stroke-width="8" stroke-dasharray="12 4"/>
            <path d="M218 606H300V1160H222z" fill="#eaeaea"/>
            <path d="M222 665L232 612 290 840V1035L226 1140z" fill="#7b8e8a"/>
            <path d="M258 680l30 120M288 1048l-44 90" stroke="#7b8e8a" stroke-width="4" stroke-dasharray="16 5 5 4" fill="none"/>
            <path d="M218 625L220 850 225 1160" fill="none" stroke="#2d2d2d" stroke-width="4"/><path d="M293 606L295 720 298 880 300 1160" fill="none" stroke="#2d2d2d" stroke-width="9"/>
            <path d="M290 700v130M292 1060v90" stroke="#e8e8e8" stroke-width="3" stroke-dasharray="8 7"/>
            <rect x="212" y="1160" width="126" height="138" fill="#7b8e8a" stroke="#2d2d2d" stroke-width="5"/><path d="M338 1158v140M302 1160h40" stroke="#2d2d2d" stroke-width="9"/><path d="M214 1170v110M230 1163h60" stroke="#eee" stroke-width="3" stroke-dasharray="7 9"/>
            <path d="M685 92L688 470" stroke="#2d2d2d" stroke-width="8"/><path d="M689 140v70" stroke="#2d2d2d" stroke-width="10"/><path d="M690 270v30M691 320v60" stroke="#ddd" stroke-width="2"/><path d="M685 470L689 630M694 470V620" stroke="#2d2d2d" stroke-width="4" fill="none"/><path d="M583 631h60M590 636h100" stroke="#2d2d2d" stroke-width="6"/>
            <!-- shelves -->
            <g fill="#7b8e8a" stroke="#2d2d2d" stroke-width="5">
              <path d="M849 214H915V482H854z"/><path d="M1067 208H1132V471H1068z"/><path d="M1280 217H1344V480H1281z"/>
              <path d="M848 582H917V849H853z"/><path d="M1071 581H1133V849H1069z"/><path d="M1275 586H1338V855H1273z"/>
              <path d="M601 963L882 957V1014L601 1018z"/><path d="M1037 957L1313 959V1011L1037 1017z"/>
              <path d="M600 1170L884 1165V1222L600 1226z"/><path d="M1036 1174L1315 1171V1231H1036z"/>
            </g>
            <path d="M912 225v245M1130 305v30M1342 225v240M1284 300v160M914 600v240M1132 600v240M1276 690v140M1336 600v240M1069 640v190M853 217h56M1290 479h50M1280 853h50M605 970v40M880 965v40M1042 968v40M1042 1015h150M1311 968v40M606 1175v45M720 1168h110M610 1221h220M1041 1180v45M1041 1229h260M1313 1180v45M770 963h60" fill="none" stroke="#e8e8e8" stroke-width="3" stroke-dasharray="6 10 3 8 9 13"/>
            <!-- reference grid -->
            <g fill="none" stroke="#a0a0a0" stroke-opacity=".5" stroke-width="3">
              <path d="M373 415L1091 401M375 482L1093 470M376 551L1094 538M378 620L1096 606M379 688L1098 675M380 757L1099 743M382 825L1101 811M383 892L1102 879M385 961L1104 947M386 1028L1106 1016M388 1097L1107 1084"/>
              <path d="M373 415L388 1097M445 413L460 1095M516 412L530 1094M588 410L603 1092M660 409L675 1090M732 408L746 1089M805 407L820 1087M877 405L891 1086M948 404L962 1085M1020 402L1035 1085M1091 401L1107 1084"/>
            </g>
            <path d="M859 580L862 848" stroke="#f00" stroke-width="9"/><path d="M851 590l2 250" stroke="#2d2d2d" stroke-width="7"/><path d="M606 632L690 628M686 622v16" stroke="#f00" stroke-width="8"/><path d="M698 490V640" stroke="#f00" stroke-width="8" stroke-dasharray="7 40 7 20 7 14 7 10 40"/>
            <path d="M712 680L735 663 785 612 803 595 808 578Q822 552 838 551L1018 547 1040 534 1095 523 1340 517 1358 512Q1378 498 1378 485V377L1397 360 1420 318" fill="none" stroke="#1f4e96" stroke-width="6"/>
            <path d="M714 676L723 634M717 648l6-14 4 10" stroke="#1fe01f" stroke-width="4" fill="none"/><path d="M703 672h18v17h-18z" fill="#555"/><circle cx="738" cy="660" r="10" fill="#cc2020"/>
          </svg>
          <div class="split d-flex align-items-center justify-content-center gap-2 flex-shrink-0"><svg width="6" height="10" viewBox="0 0 6 10"><path d="M0 0v10l5-5z" fill="#555"/></svg><span class="dots-v"></span></div>

          <!-- views panel -->
          <section class="views d-flex flex-column flex-shrink-0">
            <div class="ph d-flex align-items-center flex-shrink-0"><svg class="ic" width="19" height="12" viewBox="0 0 19 12"><path d="M0 1l6 3V2q1-1 3-1h7q3 0 3 3v4q0 3-3 3H9Q6 11 6 9V8l-6 3z" fill="#4a4a4a"/></svg>Views<button class="bare xbtn" aria-label="Close panel"><svg width="14" height="14"><use href="#redx"/></svg></button></div>
            <div class="type-row d-flex align-items-center flex-shrink-0">
              <label for="vt">Type:</label><select id="vt" class="form-select q"><option>Orbit (rviz)</option></select><button class="btn btn-q">Zero</button>
            </div>
            <div class="tree v-tree flex-fill">
              <div class="tree-rows v-rows">
                <div class="tr-v fw-bold"><span><svg class="ar"><use href="#d" width="10" height="12"/></svg>Current View</span><span>Orbit (rviz)</span></div>
                <div class="tr-v"><span><span class="sub">Near Clip Distance</span></span><span>0,01</span></div>
                <div class="tr-v"><label for="v1"><span class="sub">Invert Z Axis</span></label><input id="v1" class="form-check-input tick" type="checkbox"></div>
                <div class="tr-v"><span><span class="sub">Target Frame</span></span><span>&lt;Fixed Frame&gt;</span></div>
                <div class="tr-v"><span><span class="sub">Distance</span></span><span>30,966</span></div>
                <div class="tr-v"><span><span class="sub">Focal Shape Size</span></span><span>0,05</span></div>
                <div class="tr-v"><label for="v2"><span class="sub">Focal Shape Fixe…</span></label><input id="v2" class="form-check-input tick blk-tick" type="checkbox" checked></div>
                <div class="tr-v"><span><span class="sub">Yaw</span></span><span>1,55</span></div>
                <div class="tr-v"><span><span class="sub">Pitch</span></span><span>1,5698</span></div>
                <div class="tr-v"><span><span class="sub">Field of View</span></span><span>0,785398</span></div>
                <div class="tr-v"><span><svg class="ar ms-4"><use href="#r" width="8" height="12"/></svg>Focal Point</span><span>-0.39746; 0.38889; -4.0…</span></div>
              </div>
            </div>
            <div class="view-btns d-flex gap-2 flex-shrink-0"><button class="btn btn-q">Save</button><button class="btn btn-q">Remove</button><button class="btn btn-q">Rename</button></div>
          </section>
        </div>

        <!-- time panel -->
        <section class="bottom flex-shrink-0">
          <div class="ph d-flex align-items-center"><svg class="ic" width="19" height="19" viewBox="0 0 19 19"><circle cx="9.500" cy="9.500" r="8" fill="#f6f6f6" stroke="#555" stroke-width="2"/><path d="M9.500 4.500v5.500h4" fill="none" stroke="#444" stroke-width="1.500"/></svg>Time<button class="bare xbtn" aria-label="Close panel"><svg width="14" height="14"><use href="#redx"/></svg></button></div>
          <div class="time-row d-flex align-items-center">
            <button class="btn btn-q d-flex align-items-center justify-content-center"><svg width="18" height="18" viewBox="0 0 18 18"><path d="M1.500 1h5v16h-5zM10.500 1h5v16h-5z" fill="#c9ccc4" stroke="#8b8e88"/></svg>Pause</button>
            <label for="sync" class="sync-l">Synchronization:</label>
            <select id="sync" class="form-select q"><option>Off</option></select>
            <label for="t1" class="ros-l">ROS Time:</label><input id="t1" class="form-control q" value="31.57">
            <label for="t2">ROS Elapsed:</label><input id="t2" class="form-control q" value="31.56">
            <label for="t3">Wall Time:</label><input id="t3" class="form-control q" value="1730488810.76">
            <label for="t4">Wall Elapsed:</label><input id="t4" class="form-control q" value="61.48">
          </div>
          <div class="status-row d-flex align-items-center"><button class="btn btn-q reset me-2">Reset</button><span><b>Left-Click:</b> Rotate.&nbsp; <b>Middle-Click:</b> Move X/Y.&nbsp; <b>Right-Click/Mouse Wheel:</b>: Zoom.&nbsp; <b>Shift</b>: More options.</span><span class="fps">8 fps</span></div>
        </section>
      </div>
    </div>
  </div>

  <div class="vm-status d-flex align-items-center justify-content-end">
    <svg width="16" height="16" viewBox="0 0 16 16"><rect x="1" width="13" height="15" rx="1" fill="#2d83dc"/><circle cx="8" cy="7" r="4" fill="#e6f2fc"/><circle cx="8" cy="7" r="1.500" fill="#2d83dc"/></svg>
    <svg width="16" height="16" viewBox="0 0 16 16"><circle cx="8" cy="8" r="7" fill="#777"/><circle cx="8" cy="8" r="2" fill="#444"/></svg>
    <svg width="16" height="16" viewBox="0 0 16 16"><path d="M1 4h3l3-3v13l-3-3H1z" fill="#4fb2e8"/><path d="M8 2h3v13H8zM12 7h3v8h-3z" fill="#6e7b86"/></svg>
    <svg width="16" height="16" viewBox="0 0 16 16"><path d="M6 1h8v7H6zM1 7h8v7H1z" fill="#dfe9f5" stroke="#2c5cae"/><circle cx="12" cy="12" r="4" fill="#e5512f"/></svg>
    <svg width="16" height="16" viewBox="0 0 16 16"><path d="M1 15l2-7 6-5 4 4-6 6z" fill="#7cc4f2"/><path d="M10 1l5 5-2 2-5-5z" fill="#e8f4fc"/></svg>
    <svg width="16" height="16" viewBox="0 0 16 16"><path d="M1 3h8l1-2h5v14H1z" fill="#7b7b7b"/></svg>
    <svg width="16" height="16" viewBox="0 0 16 16"><rect x="1" y="1" width="14" height="11" fill="#f0f6fc"/><rect x="3" y="3" width="10" height="7" fill="#1f5fc0"/><path d="M5 5h6v4H5z" fill="#cfe1f8"/><path d="M3 13h10v2H3z" fill="#ddd"/></svg>
    <svg width="16" height="16" viewBox="0 0 16 16"><path d="M1 5h10v10H1z" fill="#cfe0f4"/><path d="M1 5h9v6H1z" fill="#1f4fb0"/><path d="M7 1h8v7H7z" fill="#7f96e0"/></svg>
    <svg width="16" height="16" viewBox="0 0 16 16"><path d="M1 1h10v14H1z" fill="#5cc82a"/><path d="M2 3l8 10M9 3L3 12" stroke="#143" stroke-width="1.500"/><path d="M12 1h2v14h-2z" fill="#e01010"/></svg>
    <svg width="16" height="16" viewBox="0 0 16 16"><circle cx="6" cy="7" r="6" fill="#6cc0ee"/><path d="M8 4l7 4-3 7-5-3z" fill="#55c83a"/></svg>
    <svg width="16" height="16" viewBox="0 0 16 16"><rect x="1" y="1" width="14" height="14" rx="1" fill="#8fd4f8"/><path d="M6 3h4v5h3l-5 5-5-5h3z" fill="#143c78"/></svg>
    <span>Right Ctrl</span>
    <svg class="align-self-end ms-2" width="14" height="14" viewBox="0 0 14 14"><path d="M11 2h2M8 5h5M5 8h8M2 11h11" stroke="#8b8b8b" stroke-width="2" stroke-dasharray="2 1"/></svg>
  </div>
</section>

<footer class="taskbar align-items-center">
  <div class="d-flex align-items-center gap-2">
    <svg width="26" height="26" viewBox="0 0 26 26"><path d="M10 0q4 5 1 9t-10 3q1 5 7 4t8-9-6-7z" fill="#f5a623"/><path d="M6 25a6 6 0 0 1 0-12 8 8 0 0 1 14 2 5 5 0 0 1 0 10z" fill="#93b8f5"/></svg>
    <div><div>23°C</div><div class="muted">Berawan</div></div>
  </div>
  <div class="apps d-flex align-items-center">
    <button class="bare app" aria-label="Start"><svg width="24" height="24" viewBox="0 0 24 24"><path d="M0 0h11.500v11.500H0zM12.500 0H24v11.500H12.500zM0 12.500h11.500V24H0zM12.500 12.500H24V24H12.500z" fill="url(#gwin)"/></svg></button>
    <div class="tb-search d-flex align-items-center">
      <svg width="16" height="16" viewBox="0 0 16 16"><circle cx="7" cy="7" r="5.500" fill="none" stroke="#e8eaee" stroke-width="1.500"/><path d="M11 11l4 4" stroke="#e8eaee" stroke-width="1.500"/></svg>
      <input id="cari" class="flex-fill" placeholder="Cari" aria-label="Cari">
      <svg width="48" height="24" viewBox="0 0 48 24"><ellipse cx="25" cy="21" rx="21" ry="2.500" fill="#6f8f4a"/><path d="M8 6q4-2 8-2 6-4 14-3 8 0 11 4l3 9-2 1-1-5-1 4 1 6h-3l-2-6-9 1-1 6h-3l-2-6q-5 0-8-5z" fill="#a0693f"/><path d="M6 7q-4-1-3-6M12 6q3-1 2-5" stroke="#eadfc8" stroke-width="1.500" fill="none"/><path d="M6 7q6-2 9 2l-1 6q-4 3-6 0z" fill="#6d4426"/></svg>
    </div>
    <button class="bare app" aria-label="Task view"><svg width="24" height="24" viewBox="0 0 24 24"><rect x="6" y="1" width="18" height="17" rx="1" fill="#f2f2f2"/><rect y="7" width="17" height="16" rx="1" fill="#7b7f88" fill-opacity=".9"/></svg></button>
    <button class="bare app" aria-label="Copilot"><svg width="25" height="25"><use href="#copilot"/></svg></button>
    <button class="bare app open" aria-label="File Explorer"><svg width="26" height="24" viewBox="0 0 26 24"><path d="M1 2q0-1 1-1h8l2 3h-11z" fill="#d89a1d"/><path d="M1 4h24q1 0 1 1v17q0 1-1 1H1z" fill="#fcd049"/><path d="M6 23v-5q0-2 2-2h10q2 0 2 2v5z" fill="#1b7cd0"/></svg></button>
    <button class="bare app" aria-label="Monitor"><svg width="24" height="19" viewBox="0 0 24 19"><rect width="24" height="19" fill="#dce9f2"/><path d="M2 17v-5l3 2 3-9 3 8 3-5 3 5 2-4 3 8z" fill="#5ba8dc" stroke="#2478b4"/></svg></button>
    <button class="bare app open" aria-label="Edge"><svg width="26" height="26" viewBox="0 0 26 26"><use href="#edge"/><circle cx="7" cy="20" r="5.500" fill="#fff"/><circle cx="7" cy="18.500" r="2" fill="#666"/><path d="M3.500 23q3.500-4 7 0z" fill="#666"/></svg></button>
    <button class="bare app open" aria-label="WhatsApp"><svg width="25" height="25" viewBox="0 0 26 26"><path d="M2 24l2-6A11 11 0 1 1 8 22z" fill="none" stroke="#25d366" stroke-width="2.500"/><path d="M9 7q3 0 3 4l-1 1q1 3 4 4l1-1q4 0 3 3-4 3-9-2T7 9z" fill="#25d366"/></svg></button>
    <button class="bare app open" aria-label="Edge"><svg width="26" height="26" viewBox="0 0 26 26"><use href="#edge"/><circle cx="7" cy="19" r="6" fill="#6fcbd8"/><path d="M5 12h4v7l-2 4-2-4z" fill="#a06a9a"/></svg></button>
    <button class="bare app open" aria-label="Virtual machines"><svg width="25" height="24" viewBox="0 0 25 24"><path d="M0 2h4l2 14q1 4 5 5V8" fill="none" stroke="#127a86" stroke-width="3"/><path d="M15 9V3h7v6zM18 9V6" fill="none" stroke="#f28a1c" stroke-width="3"/><path d="M24 13h-8v4h7v5h-9" fill="none" stroke="#127a86" stroke-width="3"/></svg></button>
    <button class="bare app open" aria-label="VirtualBox"><svg width="26" height="26"><use href="#vbox"/></svg></button>
  </div>
  <div class="d-flex align-items-center justify-content-end">
    <svg width="12" height="8" viewBox="0 0 12 8"><path d="M1 7l5-5 5 5" fill="none" stroke="#fff" stroke-width="1.500"/></svg>
    <span class="lang">IND</span>
    <svg width="16" height="14" viewBox="0 0 16 14"><path d="M1 5q7-6 14 0M3.500 8q4.500-4 9 0M5.500 10.500q2.500-2 5 0" fill="none" stroke="#fff" stroke-width="1.300"/><circle cx="8" cy="12.500" r="1.300" fill="#fff"/></svg>
    <svg class="ms-2" width="17" height="14" viewBox="0 0 17 14"><path d="M1 5h3l4-4v12L4 9H1zM11 5l5 5M16 5l-5 5" fill="none" stroke="#fff" stroke-width="1.200"/></svg>
    <svg class="ms-2" width="18" height="14" viewBox="0 0 18 14"><rect x="2" y="3" width="13" height="10" rx="2" fill="none" stroke="#fff" stroke-width="1.500"/><path d="M7 5h4v6H4zM16 6h2v4h-2zM3 0L0 5h3L2 9l4-6H3z" fill="#fff"/></svg>
    <div class="clock text-end"><div>02.20.10</div><div>02/11/2024</div></div>
    <svg width="13" height="16" viewBox="0 0 13 16"><path d="M6.500 0Q11 0 11 5v4l2 3H0l2-3V5q0-5 4.500-5zM4.500 13.500h4q-2 3-4 0z" fill="#eaf3fa"/></svg>
  </div>
</footer>
</body>
</html>
